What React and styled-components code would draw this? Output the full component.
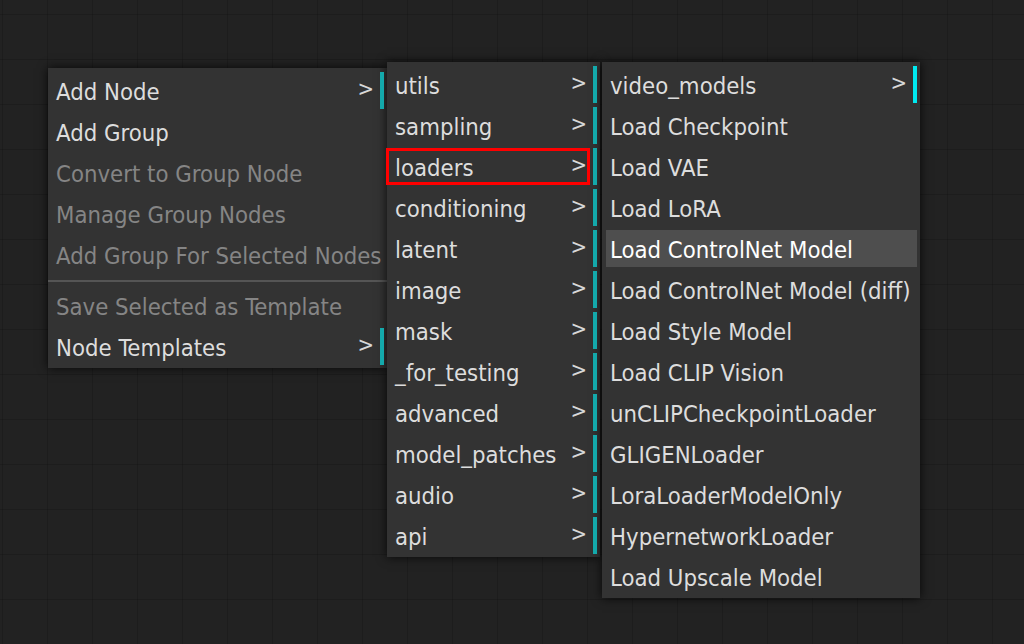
import styled, { createGlobalStyle } from 'styled-components'

const GlobalStyle = createGlobalStyle`
  html, body {
    margin: 0;
    padding: 0;
    background: #222222;
  }
`
const Canvas = styled.div`
  width: 1024px;
  height: 644px;
  box-sizing: border-box;
  overflow: hidden;
  padding: 62px 0 0 48px;
  display: flex;
  align-items: flex-start;
  background-color: #222222;
  background-image:
    linear-gradient(to right, rgba(0, 0, 0, 0.14) 1px, transparent 1px),
    linear-gradient(to bottom, rgba(0, 0, 0, 0.14) 1px, transparent 1px);
  background-size: 45px 45px;
  background-position: 2px 14px;
  font-family: "DejaVu Sans Condensed", "DejaVu Sans", sans-serif;
  font-stretch: condensed;
`
const Menu = styled.div`
  width: ${p => p.$width}px;
  margin: ${p => p.$drop || 0}px 0 0 ${p => p.$gap || 0}px;
  box-sizing: border-box;
  flex-shrink: 0;
  display: flex;
  flex-direction: column;
  padding: 2px 0 1px;
  background: #333333;
  box-shadow: 0 0 10px rgba(0, 0, 0, 0.8);
`
const Entry = styled.div`
  position: relative;
  height: 37px;
  margin: 2px 3px 2px 4px;
  padding: 2px 0 0 4px;
  box-sizing: border-box;
  display: flex;
  align-items: center;
  justify-content: space-between;
  font-size: 23.7px;
  white-space: nowrap;
  color: ${p => (p.$disabled ? '#858585' : p.$hover ? '#ffffff' : '#dddddd')};
  background: ${p => (p.$hover ? '#4e4e4e' : 'transparent')};
  border-right: ${p => (p.$sub ? `4px solid ${p.$bright ? '#00e9f0' : '#14a9ab'}` : 'none')};
`
const Arrow = styled.span`
  margin-right: 6px;
  margin-top: -6px;
  font-size: 22px;
  color: #d8d8d8;
`
const Separator = styled.div`
  height: 2px;
  margin: 5px 0 3px;
  background: #555555;
`
const Marker = styled.div`
  position: absolute;
  left: -5px;
  right: 3px;
  top: 0;
  bottom: 0;
  border: 3px solid #ff0000;
  pointer-events: none;
`

const mainMenu = [
  { label: 'Add Node', sub: true },
  { label: 'Add Group' },
  { label: 'Convert to Group Node', disabled: true },
  { label: 'Manage Group Nodes', disabled: true },
  { label: 'Add Group For Selected Nodes', disabled: true },
  { separator: true },
  { label: 'Save Selected as Template', disabled: true },
  { label: 'Node Templates', sub: true }
]

const categories = [
  'utils', 'sampling', 'loaders', 'conditioning', 'latent', 'image',
  'mask', '_for_testing', 'advanced', 'model_patches', 'audio', 'api'
].map(label => ({ label, sub: true, marked: label === 'loaders' }))

const loaders = [
  { label: 'video_models', sub: true, bright: true },
  { label: 'Load Checkpoint' },
  { label: 'Load VAE' },
  { label: 'Load LoRA' },
  { label: 'Load ControlNet Model', hover: true },
  { label: 'Load ControlNet Model (diff)' },
  { label: 'Load Style Model' },
  { label: 'Load CLIP Vision' },
  { label: 'unCLIPCheckpointLoader' },
  { label: 'GLIGENLoader' },
  { label: 'LoraLoaderModelOnly' },
  { label: 'HypernetworkLoader' },
  { label: 'Load Upscale Model' }
]

const ContextMenu = ({ items, width, drop, gap }) => (
  <Menu $width={width} $drop={drop} $gap={gap}>
    {items.map((it, i) =>
      it.separator ? (
        <Separator key={i} />
      ) : (
        <Entry key={i} $disabled={it.disabled} $sub={it.sub} $bright={it.bright} $hover={it.hover}>
          <span>{it.label}</span>
          {it.sub ? <Arrow>&gt;</Arrow> : null}
          {it.marked ? <Marker /> : null}
        </Entry>
      )
    )}
  </Menu>
)

const App = () => (
  <Canvas>
    <GlobalStyle />
    <ContextMenu items={mainMenu} width={339} drop={6} />
    <ContextMenu items={categories} width={213} />
    <ContextMenu items={loaders} width={318} gap={2} />
  </Canvas>
)
export default App
